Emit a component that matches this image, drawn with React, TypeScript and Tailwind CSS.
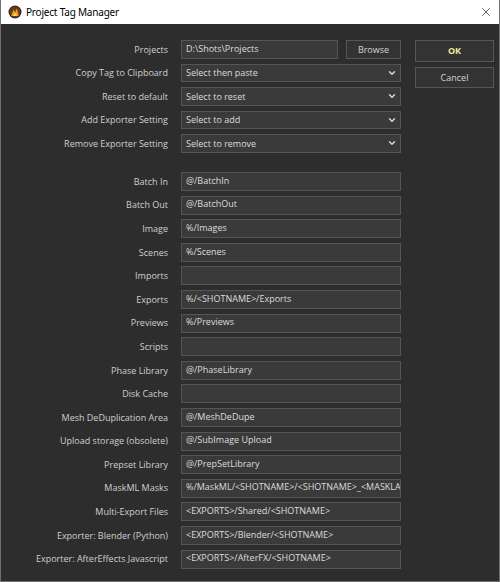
import { ChevronDown, X } from 'lucide-react'

const TOP_ROWS: { label: string; value: string }[] = [
  { label: 'Copy Tag to Clipboard', value: 'Select then paste' },
  { label: 'Reset to default', value: 'Select to reset' },
  { label: 'Add Exporter Setting', value: 'Select to add' },
  { label: 'Remove Exporter Setting', value: 'Select to remove' },
]

const TAG_ROWS: [string, string][] = [
  ['Batch In', '@/BatchIn'],
  ['Batch Out', '@/BatchOut'],
  ['Image', '%/Images'],
  ['Scenes', '%/Scenes'],
  ['Imports', ''],
  ['Exports', '%/<SHOTNAME>/Exports'],
  ['Previews', '%/Previews'],
  ['Scripts', ''],
  ['Phase Library', '@/PhaseLibrary'],
  ['Disk Cache', ''],
  ['Mesh DeDuplication Area', '@/MeshDeDupe'],
  ['Upload storage (obsolete)', '@/SubImage Upload'],
  ['Prepset Library', '@/PrepSetLibrary'],
  ['MaskML Masks', '%/MaskML/<SHOTNAME>/<SHOTNAME>_<MASKLAYER>'],
  ['Multi-Export Files', '<EXPORTS>/Shared/<SHOTNAME>'],
  ['Exporter: Blender (Python)', '<EXPORTS>/Blender/<SHOTNAME>'],
  ['Exporter: AfterEffects Javascript', '<EXPORTS>/AfterFX/<SHOTNAME>'],
]

const font = { fontFamily: '"Open Sans", "Noto Sans", sans-serif' }

function Label({ children }: { children: string }) {
  return (
    <span className="w-[168px] shrink-0 whitespace-nowrap pr-px text-right text-[9px] leading-normal text-[#cfcfcf]">
      {children}
    </span>
  )
}

function Field({ value, className = 'w-[220px]' }: { value: string; className?: string }) {
  return (
    <div
      className={`flex h-full items-center overflow-hidden whitespace-nowrap border border-[#555555] bg-[#3a3a3a] pl-[4px] text-[9px] leading-normal text-[#dcdcdc] ${className}`}
    >
      <span className="-mt-[2px]">{value}</span>
    </div>
  )
}

function Select({ value }: { value: string }) {
  return (
    <div className="flex h-full w-[220px] items-center justify-between border border-[#555555] bg-[#3a3a3a] pl-[4px] pr-[3px] text-[9px] leading-normal text-[#dcdcdc]">
      <span>{value}</span>
      <ChevronDown className="size-[10px] text-[#d8d8d8]" strokeWidth={3.4} />
    </div>
  )
}

function Button({ children, className = '' }: { children: string; className?: string }) {
  return (
    <div
      className={`flex items-center justify-center border border-[#575757] bg-[#333333] text-[9px] leading-normal text-[#d4d4d4] ${className}`}
    >
      {children}
    </div>
  )
}

export default function App() {
  return (
    <div
      className="flex h-[582px] w-[500px] flex-col border-x border-b border-[#707070] bg-[#2d2d2d]"
      style={font}
    >
      {/* title bar */}
      <div className="flex h-[24px] shrink-0 items-center bg-white pl-[7px] pr-[6px]">
        <svg width="14" height="14" viewBox="0 0 14 14" className="shrink-0">
          <circle cx="7" cy="7" r="6.5" fill="#3a2a20" />
          <circle cx="7" cy="7" r="5.2" fill="#6b3a18" />
          <path d="M3.5 11 C3.8 7.5 5.2 6.8 5.6 4.5 C6.6 6 6.8 6.6 7 8 C7.4 6.6 8 5.4 8.6 3.6 C9.4 5.6 10.4 7.6 10.5 11 Z" fill="#f39a2a" />
          <path d="M5.2 11 C5.6 9.2 6.4 8.6 7 7.6 C7.6 8.8 8.6 9.6 8.8 11 Z" fill="#ffd34d" />
        </svg>
        <span
          className="ml-[4px] text-[10px] tracking-[-0.2px] text-black"
          style={{ fontFamily: '"Noto Sans", "Open Sans", sans-serif' }}
        >
          Project Tag Manager
        </span>
        <X className="ml-auto size-[14px] text-[#222]" strokeWidth={1.2} />
      </div>

      <div className="flex pt-[16px]">
        {/* fields */}
        <div className="flex w-[400px] flex-col">
          <div className="flex flex-col gap-[5px]">
            <div className="flex h-[18.5px] items-center gap-[12px]">
              <Label>Projects</Label>
              <div className="flex h-full gap-[8px]">
                <Field value="D:\Shots\Projects" className="w-[157px]" />
                <Button className="h-full w-[55px]">Browse</Button>
              </div>
            </div>
            {TOP_ROWS.map((r) => (
              <div key={r.label} className="flex h-[18.5px] items-center gap-[12px]">
                <Label>{r.label}</Label>
                <Select value={r.value} />
              </div>
            ))}
          </div>

          <div className="mt-[19.5px] flex flex-col gap-[4.6px]">
            {TAG_ROWS.map(([label, value]) => (
              <div key={label} className="flex h-[19px] items-center gap-[12px]">
                <Label>{label}</Label>
                <Field value={value} />
              </div>
            ))}
          </div>
        </div>

        {/* dialog buttons */}
        <div className="ml-[14px] flex w-[79px] flex-col gap-[5px]">
          <Button className="h-[22px] font-bold !text-[#e8e89a]">OK</Button>
          <Button className="h-[21px]">Cancel</Button>
        </div>
      </div>
    </div>
  )
}
